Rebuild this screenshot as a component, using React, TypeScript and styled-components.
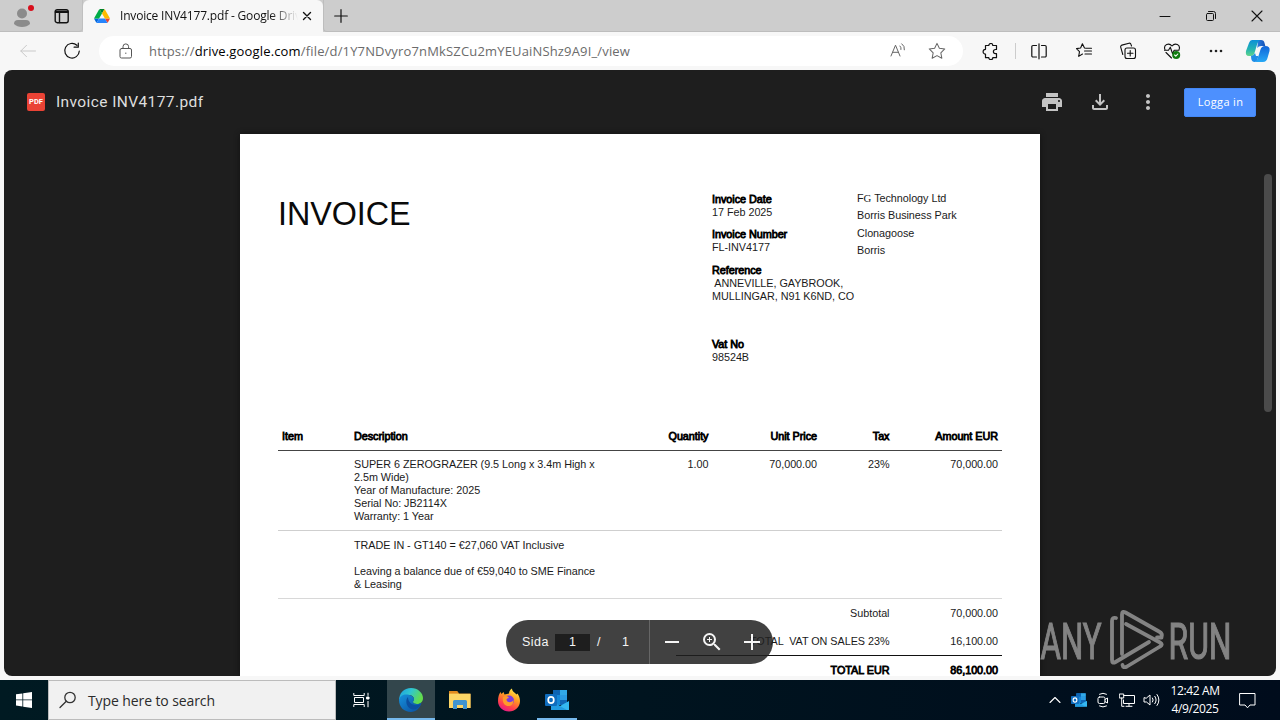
import React from 'react';
import styled, { createGlobalStyle } from 'styled-components';
import { MdPrint, MdMoreVert, MdOutlineFileDownload, MdOutlineZoomIn } from 'react-icons/md';

const Global = createGlobalStyle`
  *{box-sizing:border-box}
  body{margin:0;overflow:hidden;background:#f7f7f7}
`;
const Screen = styled.div`
  width:1280px;height:720px;display:flex;flex-direction:column;position:relative;overflow:hidden;
  font-family:"Open Sans","Noto Sans",sans-serif;color:#111;background:#f7f7f7;
`;
const TitleBar = styled.header`height:32px;flex:none;display:flex;background:#cdcdcd;`;
const TitleStart = styled.div`
  width:83px;display:flex;align-items:center;padding-left:12px;gap:19px;border-bottom-right-radius:4px;
  border-bottom:1px solid #bdbdbd;border-right:1px solid #c0c0c0;
`;
const Tab = styled.div`
  width:240px;height:32px;background:#f7f7f7;border-radius:6px 6px 0 0;display:flex;align-items:center;padding-left:11px;
`;
const TabTitle = styled.span`
  margin:0 4px 0 10px;width:178px;font-size:12px;line-height:16px;white-space:nowrap;overflow:hidden;letter-spacing:-.18px;
  mask-image:linear-gradient(90deg,#000 150px,transparent 178px);
`;
const TitleEnd = styled.div`
  flex:1;display:flex;align-items:center;padding-left:10px;border-bottom:1px solid #bdbdbd;border-left:1px solid #bdbdbd;border-bottom-left-radius:4px;
`;
const WindowButtons = styled.div`margin-left:auto;display:flex;gap:34px;padding-right:17px;`;
const Toolbar = styled.nav`height:38px;flex:none;display:flex;align-items:center;padding-left:19px;`;
const Reload = styled.span`width:62px;flex:none;display:flex;justify-content:center;padding-left:7px;`;
const AddressBar = styled.div`
  width:864px;flex:none;height:30px;border-radius:15px;background:#fff;display:flex;align-items:center;padding:0 17px 0 19px;
`;
const Url = styled.span`
  margin-left:15px;font-size:13px;letter-spacing:.16px;color:#6b6b6b;white-space:nowrap;line-height:20px;
  b{font-weight:400;color:#000}
`;
const AddressActions = styled.div`margin-left:auto;display:flex;gap:21px;`;
const ToolIcons = styled.div`display:flex;align-items:center;margin-left:18px;flex:none;`;
const ToolSlot = styled.span<{ $w: number }>`width:${p => p.$w}px;flex:none;display:flex;justify-content:center;align-items:center;`;
const Copilot = styled.svg`margin-left:22px;flex:none;`;
const Divider = styled.span`width:1px;height:16px;background:#ccc;`;

const Viewer = styled.main`
  flex:none;height:606px;margin:0 4px;border-radius:8px;background:#1e1e1e;overflow:hidden;display:flex;flex-direction:column;position:relative;
`;
const ViewerBar = styled.div`height:64px;flex:none;display:flex;align-items:center;padding:0 20px 0 23px;color:#d0d0d0;`;
const PdfBadge = styled.span`
  width:18px;height:18px;border-radius:2px;background:#ea4335;color:#fff;font:bold 7.5px/18px "Roboto",sans-serif;text-align:center;
`;
const FileName = styled.h1`margin:0 auto 0 11px;font:400 15.5px/22px Roboto,sans-serif;letter-spacing:.4px;color:#dedede;`;
const ViewerActions = styled.div`display:flex;align-items:center;gap:24px;margin-right:24px;color:#c4c4c4;`;
const Login = styled.button`
  width:72px;height:29px;border:1px solid #4387f5;border-radius:2px;background:#4d90fe;color:#fff;padding:0 0 0 1px;
  font:400 11px/26px "Open Sans",sans-serif;letter-spacing:.35px;
`;
const Scrollbar = styled.div`
  position:absolute;right:4px;top:104px;width:8px;height:238px;border-radius:4px;background:#4b4b4b;
`;

const Page = styled.article`
  width:800px;height:542px;margin:0 auto;background:#fff;padding:0 38px;box-shadow:0 0 5px #111;
  font:400 10.8px/13px "Liberation Sans",Arial,sans-serif;color:#1a1a1a;letter-spacing:-.03px;
`;
const Header = styled.header`height:288px;display:flex;padding-top:59px;`;
const Title = styled.h2`margin:0;padding-top:1px;width:434px;font-size:32.3px;line-height:40px;font-weight:400;color:#0a0a0a;letter-spacing:-.05px;`;
const Facts = styled.dl`margin:0;width:145px;display:flex;flex-direction:column;`;
const Fact = styled.div<{ $gap?: number }>`margin-bottom:${p => p.$gap ?? 9.3}px;`;
const Term = styled.dt`-webkit-text-stroke:.8px #000;color:#000;`;
const Detail = styled.dd`margin:0;white-space:pre;`;
const Address = styled.address`font-style:normal;line-height:17.4px;margin-top:-3px;white-space:pre;`;
const Serif = styled.span`font-family:"Liberation Serif",serif;`;

const Row = styled.div<{ $h: number; $top: number; $line?: string }>`
  display:grid;grid-template-columns:72px 254px 108.5px 108.5px 72.5px 108.5px;height:${p => p.$h}px;
  padding-top:${p => p.$top}px;border-bottom:${p => (p.$line ? `1px solid ${p.$line}` : '0')};
`;
const Cell = styled.span<{ $right?: boolean; $bold?: boolean }>`
  padding:0 4px;white-space:pre;text-align:${p => (p.$right ? 'right' : 'left')};
  ${p => p.$bold && '-webkit-text-stroke:.8px #000;color:#000;'}
`;
const Totals = styled.div`display:flex;flex-direction:column;`;
const TotalRow = styled.div<{ $h: number; $top: number; $line?: boolean }>`
  display:grid;grid-template-columns:1fr 108.5px;margin-left:398px;height:${p => p.$h}px;padding-top:${p => p.$top}px;
  border-bottom:${p => (p.$line ? '1px solid #111' : '0')};
`;

const PageControls = styled.div`
  position:absolute;left:502px;top:550px;width:267px;height:44px;border-radius:22px;background:rgba(32,32,32,.85);color:#f5f5f5;
  display:flex;align-items:center;font:400 12.5px/18px "Liberation Sans",sans-serif;
`;
const PageLabel = styled.span`margin-left:16px;width:33px;letter-spacing:.5px;`;
const PageInput = styled.span`width:35px;height:17px;line-height:17px;background:#1e1e1e;text-align:center;`;
const PageOf = styled.span`width:58px;display:flex;justify-content:space-between;padding:0 19px 0 7px;`;
const ZoomGroup = styled.div`height:44px;border-left:1px solid #666;display:flex;align-items:center;margin-left:auto;width:124.5px;padding-left:14px;gap:20px;`;

const Watermark = styled.svg`position:absolute;left:1036px;top:604px;`;

const Taskbar = styled.footer`
  height:40px;margin-top:4px;flex:none;display:flex;background:linear-gradient(90deg,#001a22,#00141f 50%,#000c1c);color:#fff;
`;
const StartButton = styled.div`width:48px;display:flex;align-items:center;justify-content:center;`;
const Search = styled.div`
  width:288px;border:1px solid #bcbcbc;background:#f1f1f1;color:#2b2b2b;display:flex;align-items:center;padding-left:10px;gap:11px;
  font-size:14px;letter-spacing:-.1px;
`;
const TaskItem = styled.div<{ $active?: boolean; $open?: boolean; $w?: number }>`
  width:${p => p.$w ?? 49}px;display:flex;align-items:center;justify-content:center;position:relative;
  background:${p => (p.$active ? '#33464c' : 'transparent')};
  &::after{content:'';display:${p => (p.$open ? 'block' : 'none')};position:absolute;bottom:0;height:2px;background:#76b9ed;
    left:${p => (p.$active ? 0 : 4)}px;right:${p => (p.$active ? 0 : 4)}px}
`;
const Tray = styled.div`margin-left:auto;display:flex;align-items:center;padding-right:24px;`;
const Clock = styled.div`width:62px;margin:0 13px 0 1px;font-size:12px;line-height:18px;text-align:center;letter-spacing:-.37px;white-space:nowrap;`;

type IconProps = { w: number; h?: number; vb?: string; sw?: number; color?: string; children: React.ReactNode };
const IconSvg = styled.svg`flex:none;`;
const Icon = ({ w, h = w, vb, sw = 1, color = 'currentColor', children }: IconProps) => (
  <IconSvg width={w} height={h} viewBox={vb ?? `0 0 ${w} ${h}`} fill="none" stroke={color} strokeWidth={sw} strokeLinecap="round" strokeLinejoin="round">
    {children}
  </IconSvg>
);

const OutlookMark = ({ size }: { size: number }) => (
  <svg width={size} height={size} viewBox="0 0 24 24">
    <path d="M8 2h14v15H8z" fill="#1487d8" /><path d="M8 2h7v5H8z" fill="#0d64b3" /><path d="M15 2h7v5h-7z" fill="#32a9e7" />
    <path d="M15 7h7v5h-7z" fill="#2b9be2" /><path d="M15 12h7v5h-7z" fill="#1066b5" />
    <path d="M6 13l9 5 9-5v9H6z" fill="#35b8f1" /><path d="M6 13l16 9H6z" fill="#1a8fda" opacity=".7" />
    <rect x="0" y="6" width="12" height="12" rx="1" fill="#0f6cbd" />
    <ellipse cx="6" cy="12" rx="2.8" ry="3.1" fill="none" stroke="#fff" strokeWidth="1.7" />
  </svg>
);

const Tabs = () => (
  <TitleBar>
    <TitleStart>
      <svg width="23" height="24" viewBox="0 0 23 24">
        <circle cx="10" cy="9.5" r="5" fill="#8b8b8b" /><path d="M2 20q0-4 4-4h8q4 0 4 4-3 3-8 3t-8-3z" fill="#8b8b8b" />
        <circle cx="19" cy="4" r="3" fill="#d80f1c" />
      </svg>
      <Icon w={16} sw={1.4}><rect x="1.2" y="1.7" width="13" height="13" rx="2" /><path d="M1.5 3.4h12.5M1.5 4.4h12.5M5.5 5v9.5" /></Icon>
    </TitleStart>
    <Tab>
      <svg width="16" height="14" viewBox="0 0 87.3 78">
        <path d="m6.6 66.85 3.85 6.65c.8 1.4 1.95 2.5 3.3 3.3l13.75-23.8h-27.5c0 1.55.4 3.1 1.2 4.5z" fill="#0066da" />
        <path d="m43.65 25-13.75-23.8c-1.35.8-2.5 1.9-3.3 3.3l-25.4 44a9.06 9.06 0 0 0-1.2 4.5h27.5z" fill="#00ac47" />
        <path d="m73.55 76.8c1.35-.8 2.5-1.9 3.3-3.3l1.6-2.75 7.65-13.25c.8-1.4 1.2-2.95 1.2-4.5h-27.5l5.85 11.5z" fill="#ea4335" />
        <path d="m43.65 25 13.75-23.8c-1.35-.8-2.9-1.2-4.5-1.2h-18.5c-1.6 0-3.15.45-4.5 1.2z" fill="#00832d" />
        <path d="m59.8 53h-32.3l-13.75 23.8c1.35.8 2.9 1.2 4.5 1.2h50.8c1.6 0 3.15-.45 4.5-1.2z" fill="#2684fc" />
        <path d="m73.4 26.5-12.7-22c-.8-1.4-1.95-2.5-3.3-3.3l-13.75 23.8 16.15 28h27.45c0-1.55-.4-3.1-1.2-4.5z" fill="#ffba00" />
      </svg>
      <TabTitle>Invoice INV4177.pdf - Google Drive</TabTitle>
      <Icon w={10} sw={1.4}><path d="M1.5 1.5l7 7M8.5 1.5l-7 7" /></Icon>
    </Tab>
    <TitleEnd>
      <Icon w={14} sw={1.2}><path d="M7 .7v12.6M.7 7h12.6" /></Icon>
      <WindowButtons>
        <Icon w={12}><path d="M1 6.5h10" /></Icon>
        <Icon w={12}><rect x="1.5" y="3.5" width="7" height="7" rx="1" /><path d="M3.5 1.5h5a2 2 0 0 1 2 2v5" /></Icon>
        <Icon w={12} sw={1.1}><path d="M1 1l10 10M11 1L1 11" /></Icon>
      </WindowButtons>
    </TitleEnd>
  </TitleBar>
);

const star = 'M8 1.2l2.1 4.4 4.8.6-3.5 3.4.9 4.8L8 12.1l-4.3 2.3.9-4.8L1.1 6.2l4.8-.6z';

const Navigation = () => (
  <Toolbar>
    <Icon w={18} color="#c9c9c9"><path d="M16.5 9H1.8M7.5 3.3L1.8 9l5.7 5.7" /></Icon>
    <Reload>
      <Icon w={18} sw={1.2}><path d="M13.9 3.3A7.3 7.3 0 1 0 16.3 9M15.3 1v4.2h-4.2" /></Icon>
    </Reload>
    <AddressBar>
      <Icon w={16} color="#555"><rect x="2" y="5.5" width="11.5" height="9.5" rx="1.5" /><path d="M5 5.5V3.7a2.8 2.8 0 0 1 5.6 0v1.8M7.8 10v.5" /></Icon>
      <Url>https://<b>drive.google.com</b>/file/d/1Y7NDvyro7nMkSZCu2mYEUaiNShz9A9I_/view</Url>
      <AddressActions>
        <Icon w={18} color="#666"><path d="M2 14L6.5 3.2 11 14M3.6 10.3h5.8M11 4q1.5 1.5 1 3.5M12.8 1.8q3.2 2.2 2.6 6" /></Icon>
        <Icon w={18} vb="0 0 16 16" color="#666" sw={0.9}><path d={star} /></Icon>
      </AddressActions>
    </AddressBar>
    <ToolIcons>
      <ToolSlot $w={19}><Icon w={17} sw={1.2}><path d="M4.500 2.500h2.300a2 2 0 0 1 4 0h3.700v4h-1a2.100 2.100 0 0 0 0 4.200h1v4h-3.700a2 2 0 0 1-4 0H3.500v-3.600a2.200 2.200 0 0 1 0-4.800V2.500z" /></Icon></ToolSlot>
      <ToolSlot $w={31}><Divider /></ToolSlot>
      <ToolSlot $w={16}><Icon w={18} h={17} sw={1.2}><path d="M6.5 2.5H3a1.2 1.2 0 0 0-1.2 1.2v9A1.2 1.2 0 0 0 3 14h3.5M11.5 2.5H15a1.2 1.2 0 0 1 1.2 1.2v9A1.2 1.2 0 0 1 15 14h-3.5M9 .8v15" /></Icon></ToolSlot>
      <ToolSlot $w={74}><Icon w={18} sw={1.1}><path d="M11 6.200L9.500 6 7.400 1.800 5.600 6 1.500 6.600l3 3-.8 4.800L7.500 12M11 6.200h5.500M9.500 9h7M10 12h6.500" /></Icon></ToolSlot>
      <ToolSlot $w={14}><Icon w={18} sw={1.1}><rect x="6" y="6" width="10.5" height="10.5" rx="2" /><path d="M11.2 8.5v5.5M8.5 11.2H14M3.8 12.5L1.7 5.2A1.7 1.7 0 0 1 2.900 3.1L10 1.2a1.7 1.7 0 0 1 2 1.2l.5 1.6" /></Icon></ToolSlot>
      <ToolSlot $w={74}>
        <Icon w={18} sw={1.1}><path d="M2 7.8C0 2.6 6 .3 9 4c3-3.700 9-1.400 7 3.800M1.500 8.200h4l1.800-3 2.300 6.500 1.600-3.500H16M3 10.500L8.500 16" /><circle cx="13.2" cy="13" r="4" fill="#107c10" stroke="none" /><path d="M11.600 13l1.200 1.200 2-2.200" stroke="#fff" /></Icon>
      </ToolSlot>
      <ToolSlot $w={14}><Icon w={16} h={4}><g fill="#222" stroke="none"><circle cx="3" cy="2" r="1.3" /><circle cx="8" cy="2" r="1.3" /><circle cx="13" cy="2" r="1.3" /></g></Icon></ToolSlot>
      <Copilot width="26" height="24" viewBox="0 0 26 24">
        <defs>
          <linearGradient id="cpA" x1="0" y1="0" x2="0" y2="1"><stop stopColor="#0b8fd8" /><stop offset=".6" stopColor="#25b5b0" /><stop offset="1" stopColor="#62d58a" /></linearGradient>
          <linearGradient id="cpB" x1="0" y1="0" x2="0" y2="1"><stop stopColor="#1064d8" /><stop offset="1" stopColor="#27a9f5" /></linearGradient>
          <linearGradient id="cpC" x1="0" y1="0" x2="1" y2="0"><stop stopColor="#2a7de0" /><stop offset="1" stopColor="#1250b4" /></linearGradient>
        </defs>
        <path d="M13 1h3q3 0 3.500 3l.8 3h-4q-3 0-4 2z" fill="url(#cpC)" />
        <path d="M7 1h8q-2 1-2.800 4l-2.700 9q-.8 3-3.500 3H4q-4 0-3-5L4 4q1-3 3-3z" fill="url(#cpA)" />
        <path d="M20 7q5.500 0 4.500 5l-2 7q-1 4-4.500 4h-8q2-1 2.800-4l2.700-8.500Q16.500 7 20 7z" fill="url(#cpB)" />
        <path d="M6 17q3-.2 4-3l1 3h2.300l-.6 2.500Q12 23 9.500 23 7 23 6.300 20z" fill="#1f8ee6" />
      </Copilot>
    </ToolIcons>
  </Toolbar>
);

const columns = ['Item', 'Description', 'Quantity', 'Unit Price', 'Tax', 'Amount EUR'];
const rows = [
  { h: 80, top: 7, line: '#cfcfcf', cells: ['', 'SUPER 6 ZEROGRAZER (9.5 Long x 3.4m High x\n2.5m Wide)\nYear of Manufacture: 2025\nSerial No: JB2114X\nWarranty: 1 Year', '1.00', '70,000.00', '23%', '70,000.00'] },
  { h: 68, top: 8, line: '#d8d8d8', cells: ['', 'TRADE IN - GT140 = €27,060 VAT Inclusive\n\nLeaving a balance due of €59,040 to SME Finance\n& Leasing', '', '', '', ''] },
];

const Invoice = () => (
  <Page>
    <Header>
      <Title>INVOICE</Title>
      <Facts>
        <Fact><Term>Invoice Date</Term><Detail>17 Feb 2025</Detail></Fact>
        <Fact><Term>Invoice Number</Term><Detail>FL-INV4177</Detail></Fact>
        <Fact $gap={35}><Term>Reference</Term><Detail>{' ANNEVILLE, GAYBROOK,\nMULLINGAR, N91 K6ND, CO'}</Detail></Fact>
        <Fact><Term>Vat No</Term><Detail>98524B</Detail></Fact>
      </Facts>
      <Address>F<Serif>G</Serif>{' Technology Ltd\nBorris Business Park\nClonagoose\nBorris'}</Address>
    </Header>
    <Row $h={29} $top={8} $line="#444">
      {columns.map((c, i) => <Cell key={c} $bold $right={i > 1}>{c}</Cell>)}
    </Row>
    {rows.map((r, k) => (
      <Row key={k} $h={r.h} $top={r.top} $line={r.line}>
        {r.cells.map((c, i) => <Cell key={i} $right={i > 1}>{c}</Cell>)}
      </Row>
    ))}
    <Totals>
      <TotalRow $h={29} $top={8}><Cell $right>Subtotal</Cell><Cell $right>70,000.00</Cell></TotalRow>
      <TotalRow $h={28} $top={7} $line><Cell $right>{'TOTAL  VAT ON SALES 23%'}</Cell><Cell $right>16,100.00</Cell></TotalRow>
      <TotalRow $h={20} $top={8}><Cell $right $bold>TOTAL EUR</Cell><Cell $right $bold>86,100.00</Cell></TotalRow>
    </Totals>
  </Page>
);

export default function App() {
  return (
    <Screen>
      <Global />
      <Tabs />
      <Navigation />
      <Viewer>
        <ViewerBar>
          <PdfBadge>PDF</PdfBadge>
          <FileName>Invoice INV4177.pdf</FileName>
          <ViewerActions><MdPrint size={24} /><MdOutlineFileDownload size={24} /><MdMoreVert size={24} /></ViewerActions>
          <Login>Logga in</Login>
        </ViewerBar>
        <Invoice />
        <Scrollbar />
        <PageControls>
          <PageLabel>Sida</PageLabel><PageInput>1</PageInput><PageOf><span>/</span><span>1</span></PageOf>
          <ZoomGroup>
            <Icon w={16} sw={2}><path d="M1 8h14" strokeLinecap="butt" /></Icon>
            <MdOutlineZoomIn size={24} />
            <Icon w={16} sw={2}><path d="M0 8h16M8 0v16" strokeLinecap="butt" /></Icon>
          </ZoomGroup>
        </PageControls>
      </Viewer>
      <Taskbar>
        <StartButton>
          <svg width="16" height="16" viewBox="0 0 16 16" fill="#fff"><path d="M0 2.300l6.400-.9v6.100H0zM7.200 1.300L16 0v7.500H7.200zM0 8.300h6.400v6.200L0 13.600zM7.200 8.300H16V16l-8.800-1.300z" /></svg>
        </StartButton>
        <Search>
          <Icon w={18} sw={1.3} color="#333"><circle cx="11" cy="6.500" r="5.200" /><path d="M7.300 10.300L1 16.500" /></Icon>
          Type here to search
        </Search>
        <TaskItem $w={51}>
          <Icon w={17} h={16}><path d="M.8 1v2.500h10.400V1M.8 15v-2.500h10.400V15M1.500 5.500h9v5h-9zM15 .8v3M15 9v6.200" strokeLinecap="butt" strokeLinejoin="miter" /><rect x="14" y="5" width="2" height="2" fill="#fff" /></Icon>
        </TaskItem>
        <TaskItem $w={48} $active $open>
          <svg width="24" height="24" viewBox="0 0 24 24">
            <defs>
              <linearGradient id="edA" x1="0" y1="0" x2="1" y2=".4"><stop stopColor="#1b9de2" /><stop offset=".5" stopColor="#30c6d0" /><stop offset="1" stopColor="#63dc4c" /></linearGradient>
              <linearGradient id="edB" x1="0" y1="0" x2="1" y2="1"><stop stopColor="#1692dd" /><stop offset="1" stopColor="#0a4c9c" /></linearGradient>
            </defs>
            <path d="M12 0c7 0 12 5 12 10 0 4-3 6-6 6-2.500 0-4-1-4-2s1-1.500 1-3c0-2-2-4-5-4C5 7 1 9 0 13 0 5 5 0 12 0z" fill="url(#edA)" />
            <path d="M0 12c.5-4 4.500-6 8.500-5.500C12 7 15 9 15 11c0 1.500-1 2-1 3 0 1 1.500 2 4 2 2 0 3.500-.8 4.500-1.300C21 20 17 24 12 24 5 24 0 19 0 12z" fill="url(#edB)" />
            <path d="M9 9c-3 3-2 10 3 12 4 1.500 8-1 10-5-6 3-13 0-13-7z" fill="#0b4fa0" />
          </svg>
        </TaskItem>
        <TaskItem>
          <svg width="22" height="20" viewBox="0 0 22 20">
            <path d="M0 1h8l2 2.500h11.500V18H0z" fill="#e9a63a" /><path d="M0 4h21.500v14H0z" fill="#fbd566" /><path d="M0 1h8l1.500 2H0z" fill="#e08a1e" />
            <path d="M4 11.500q0-1.500 1.500-1.500h11q1.500 0 1.500 1.500V19h-4v-4H8v4H4z" fill="#3f94cf" />
          </svg>
        </TaskItem>
        <TaskItem>
          <svg width="24" height="24" viewBox="0 0 24 24">
            <defs><linearGradient id="ff" x1=".8" y1="0" x2=".3" y2="1"><stop stopColor="#fff14f" /><stop offset=".4" stopColor="#ff9b22" /><stop offset=".75" stopColor="#ff3f4c" /><stop offset="1" stopColor="#e6178a" /></linearGradient></defs>
            <path d="M1 13c0-4 1-7 2.500-9l1 2L6.500 4l1 2.500C9 6 11 6 12 5.500 12 3 13.500 1.500 15 .5c0 3 3 4 4.500 6l1-1C22 8 23 10 23 13c0 6-5 10.500-11 10.500S1 19 1 13z" fill="url(#ff)" />
            <circle cx="12" cy="12.500" r="5" fill="#7a3be0" /><path d="M6 9c3-2 5-1 6 1-2 0-2.500 1-2.500 2 1 3 5 3 7 0 0 4-2 6-5 6-4 0-6.500-4-5.500-9z" fill="#ff9a2a" />
          </svg>
        </TaskItem>
        <TaskItem $open $w={48}><OutlookMark size={24} /></TaskItem>
        <Tray>
          <ToolSlot $w={24}><Icon w={12} h={8} sw={1.1}><path d="M1 6.500l5-5 5 5" /></Icon></ToolSlot>
          <ToolSlot $w={24}><OutlookMark size={16} /></ToolSlot>
          <ToolSlot $w={24}><Icon w={12} h={16}><rect x="1" y="5" width="7" height="6.500" rx="1.500" /><path d="M8 7.500l2.500-1.500v5L8 9.500M2.500 2.200q3.500-2 7 0M2.500 14q3.500 2 7 0" /></Icon></ToolSlot>
          <ToolSlot $w={24}><Icon w={16} h={14}><path d="M5 2.500h10.500v8H4.500V7M10 10.500V13M7 13.300h6M.7 1h4v4h-4zM2.700 5v8.300H5" strokeLinejoin="miter" /></Icon></ToolSlot>
          <ToolSlot $w={24}><Icon w={17} h={14}><path d="M1 5v4h2.500L7 12V2L3.500 5zM9.500 5q1.500 2 0 4M11.800 3.300q2.800 3.700 0 7.400M14 1.500q4 5.500 0 11" /></Icon></ToolSlot>
          <Clock>12:42 AM<br />4/9/2025</Clock>
          <Icon w={17} h={17}><path d="M1 1.500h15v11.500h-5L8.500 15.800 6 13H1z" strokeLinejoin="miter" /></Icon>
        </Tray>
      </Taskbar>
      <Watermark width="200" height="72" viewBox="0 0 200 72" fill="#8f8f8f" opacity=".9">
        <g fontFamily="Roboto, sans-serif" fontSize="50" stroke="#8f8f8f" strokeWidth="1.2">
          <text x="4.500" y="54.500" textLength="61" lengthAdjust="spacingAndGlyphs">ANY</text>
          <text x="132.500" y="54.500" textLength="63" lengthAdjust="spacingAndGlyphs">RUN</text>
        </g>
        <g fill="none" stroke="#8f8f8f" strokeWidth="3.800" strokeLinecap="round" strokeLinejoin="round">
          <path d="M86 50V10.500q0-4 3.500-2L123 27.500q4 2 2.500 6H121" />
          <path d="M80 14q-4-1-4 3v39q0 4 3.500 2L113 38" />
          <path d="M90 20l34 18.500q3.500 2 0 4L91 62.500q-4 2-4.500-1.500" />
        </g>
      </Watermark>
    </Screen>
  );
}
